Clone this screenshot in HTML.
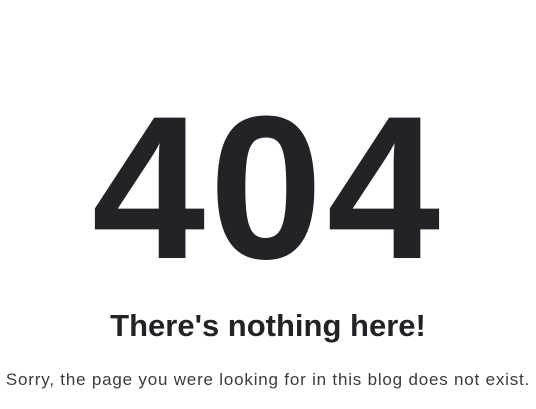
<!DOCTYPE html>
<html><head><meta charset="utf-8"><style>
html,body{margin:0;padding:0;background:#fff;width:536px;height:409px;overflow:hidden;font-family:"Liberation Sans",sans-serif;color:#222326}
.n{position:absolute;left:0;width:536px;text-align:center;top:78px;font-size:204px;line-height:220px;font-weight:bold;letter-spacing:4px}
.h{position:absolute;left:0;width:536px;text-align:center;top:306px;font-size:31px;line-height:40px;font-weight:bold}
.p{position:absolute;left:0;width:536px;text-align:center;top:369px;font-size:17px;line-height:22px;color:#3a3a40;letter-spacing:0.8px;white-space:nowrap}
</style></head><body>
<div class="n">404</div>
<div class="h">There's nothing here!</div>
<div class="p">Sorry, the page you were looking for in this blog does not exist.</div>
</body></html>
